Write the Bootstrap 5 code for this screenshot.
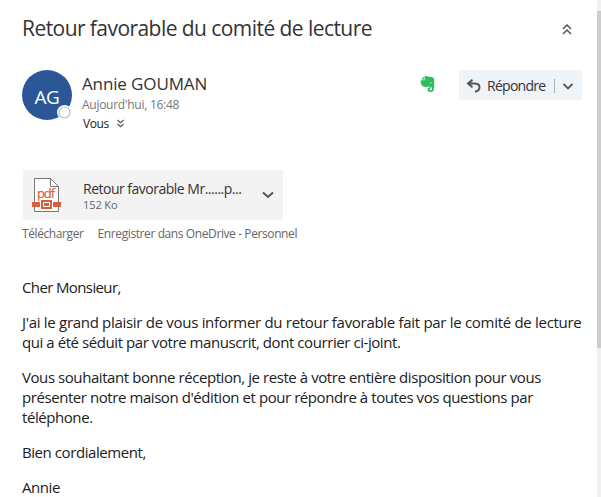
<!DOCTYPE html>
<html lang="fr">
<head>
<meta charset="utf-8">
<meta name="viewport" content="width=device-width, initial-scale=1">
<title>Retour favorable du comité de lecture</title>
<link href="https://cdn.jsdelivr.net/npm/bootstrap@5.3.0/dist/css/bootstrap.min.css" rel="stylesheet">
<style>
  body { font-family: "Open Sans", "Noto Sans", sans-serif; color: #212121; background: #fff; height: 497px; overflow: hidden; font-size: 15px; line-height: 20px; }
  svg { display: block; flex: none; }
  .reader { width: 597px; height: 497px; padding: 15px 15px 0 22px; white-space: nowrap; overflow: hidden; }
  .scroll-track { width: 4px; height: 497px; padding-top: 11px; background: #f0f0f0; }
  .scroll-thumb { height: 337px; background: #cdcdcd; }
  .subject { height: 26px; font-size: 21px; line-height: 26px; font-weight: 400; color: #333; letter-spacing: -.56px; }
  .sender-row { margin-top: 29px; height: 66px; }
  .avatar { width: 50px; height: 50px; background: #2b5797; font-size: 19px; letter-spacing: -.3px; padding-top: 4px; }
  .presence { right: 0; bottom: 0; width: 15px; height: 15px; }
  .sender-info { margin-left: 10px; }
  .sender { font-size: 17px; line-height: 22px; color: #333; letter-spacing: -.13px; margin-top: 3px; }
  .sent-at { font-size: 12px; line-height: 19px; color: #767676; letter-spacing: -.27px; }
  .recipient { font-size: 12px; line-height: 19px; color: #212121; letter-spacing: -.4px; padding-left: 1px; }
  .evernote { margin-right: 24px; }
  .btn-reply { width: 123px; height: 30px; background: #eff4f9; color: #333; font-size: 14px; line-height: 20px; padding: 2px 9px 0 7px; border-radius: 0; border: 0; }
  .reply-label { margin-left: 6px; letter-spacing: -.72px; }
  .split { width: 1px; height: 14px; background: #a9b0ad; }
  .attachment { width: 260px; height: 50px; margin: 34px 0 0 1px; background: #f3f3f3; padding: 0 9px 0 9px; }
  .file-info { margin-left: 22px; padding-top: 2px; }
  .file-name { font-size: 14px; line-height: 18px; color: #333; letter-spacing: -.5px; }
  .file-size { font-size: 11px; line-height: 14px; color: #666; letter-spacing: -.1px; }
  .file-links { font-size: 12px; line-height: 16px; color: #666; margin-top: 6px; gap: 14px; letter-spacing: -.4px; }
  .message { margin-top: 35px; letter-spacing: -.43px; }
  .message p { margin-bottom: 15px; }
  .greeting { letter-spacing: -.62px; }
  .wide-line { letter-spacing: -.3px; }
</style>
</head>
<body>
<div class="d-flex">
  <main class="reader">
    <header class="d-flex justify-content-between align-items-center">
      <h1 class="subject mb-0">Retour favorable du comité de lecture</h1>
      <svg width="30" height="26" viewBox="0 0 30 26" fill="none" stroke="#555" stroke-width="1.5"><path d="M11 14l4-4 4 4M11 19l4-4 4 4"/></svg>
    </header>
    <section class="sender-row d-flex align-items-start">
      <div class="avatar rounded-circle text-white position-relative d-flex align-items-center justify-content-center">AG
        <svg class="presence position-absolute" viewBox="0 0 15 15"><circle cx="7.500" cy="7.500" r="7.500" fill="#fff"/><circle cx="7.500" cy="7.500" r="5.500" fill="#fff" stroke="#a9c1cf" stroke-width="1.200"/></svg>
      </div>
      <div class="sender-info flex-grow-1">
        <div class="sender">Annie GOUMAN</div>
        <div class="sent-at">Aujourd'hui, 16:48</div>
        <div class="recipient d-flex align-items-center gap-2"><span>Vous</span>
          <svg width="7" height="9" viewBox="0 0 7 9" fill="none" stroke="#555" stroke-width="1.200"><path d="m.5 1 3 2.700 3-2.700M.5 5l3 2.700L6.500 5"/></svg>
        </div>
      </div>
      <svg class="evernote mt-1" width="15" height="20" viewBox="0 0 15 20"><path fill="#2dbe60" d="M4.700 2.500Q5 1.800 6.500 1.900q1.500 0 2 .8 3 .1 5 1 .8.800 .8 5.300 0 4.500-.6 7.200-.5 1.800-2.900 1.800-3.200 0-3.200-2.600 0-2.500 3.200-2.500v1.600q-1.200 0-1.200.900 0 1 1.200 1 1.300 0 1.300-1.800 0-1.500-1.500-1.700-1.700-.1-2.200-1-.7 1.500-2.500 1.200-3.800-.4-4.600-2.500Q.6 8.500 .8 6.200h3.900z"/><path fill="#2dbe60" d="M1.200 5.600 4.200 2.600v3z"/><path d="M10.300 8.900q1-.5 1.700.3" fill="none" stroke="#d5f2df" stroke-width=".8"/></svg>
      <button class="btn btn-reply d-flex align-items-center" type="button">
        <svg width="15" height="14" viewBox="0 0 15 14" fill="none" stroke="#555" stroke-width="2"><path d="M6.500.8 2 4.500l4.500 3.800M2 4.500h7q4.500.2 4.500 3.800 0 3.500-4.500 4.500"/></svg>
        <span class="reply-label">Répondre</span>
        <span class="split ms-auto me-1"></span>
        <svg class="ms-1" width="10" height="7" viewBox="0 0 10 7" fill="none" stroke="#555" stroke-width="1.800"><path d="m.5 1 4.500 4.500L9.500 1"/></svg>
      </button>
    </section>
    <section>
      <div class="attachment d-flex align-items-center">
        <svg width="29" height="34" viewBox="0 0 29 34"><path d="M2.500.5h16l8 8v25h-24z" fill="#fff" stroke="#777"/><path d="M18.500.5v8h8" fill="none" stroke="#777"/><text x="5" y="20" font-size="13" fill="#d75f3d" stroke="#d75f3d" stroke-width=".2" textLength="18">pdf</text><path d="M0 24h29v5H0z" fill="#d75f3d"/><path d="M8 21h13v11H8z" fill="#fff"/><path d="M9 22h11v9H9z" fill="#d75f3d"/><path d="M11.500 24.500h6v4h-6z" fill="none" stroke="#fff"/></svg>
        <div class="file-info"><div class="file-name">Retour favorable Mr......p...</div><div class="file-size">152 Ko</div></div>
        <svg class="ms-auto" width="12" height="8" viewBox="0 0 12 8" fill="none" stroke="#555" stroke-width="2"><path d="m1 1.500 5 4.500 5-4.500"/></svg>
      </div>
      <div class="file-links d-flex"><span>Télécharger</span><span>Enregistrer dans OneDrive - Personnel</span></div>
    </section>
    <article class="message">
      <p class="greeting">Cher Monsieur,</p>
      <p><span class="wide-line">J'ai le grand plaisir de vous informer du retour favorable fait par le comité de lecture</span><br>qui a été séduit par votre manuscrit, dont courrier ci-joint.</p>
      <p>Vous souhaitant bonne réception, je reste à votre entière disposition pour vous<br>présenter notre maison d'édition et pour répondre à toutes vos questions par<br>téléphone.</p>
      <p>Bien cordialement,</p>
      <p>Annie</p>
    </article>
  </main>
  <aside class="scroll-track"><div class="scroll-thumb"></div></aside>
</div>
<script src="https://cdn.jsdelivr.net/npm/bootstrap@5.3.0/dist/js/bootstrap.bundle.min.js"></script>
</body>
</html>
